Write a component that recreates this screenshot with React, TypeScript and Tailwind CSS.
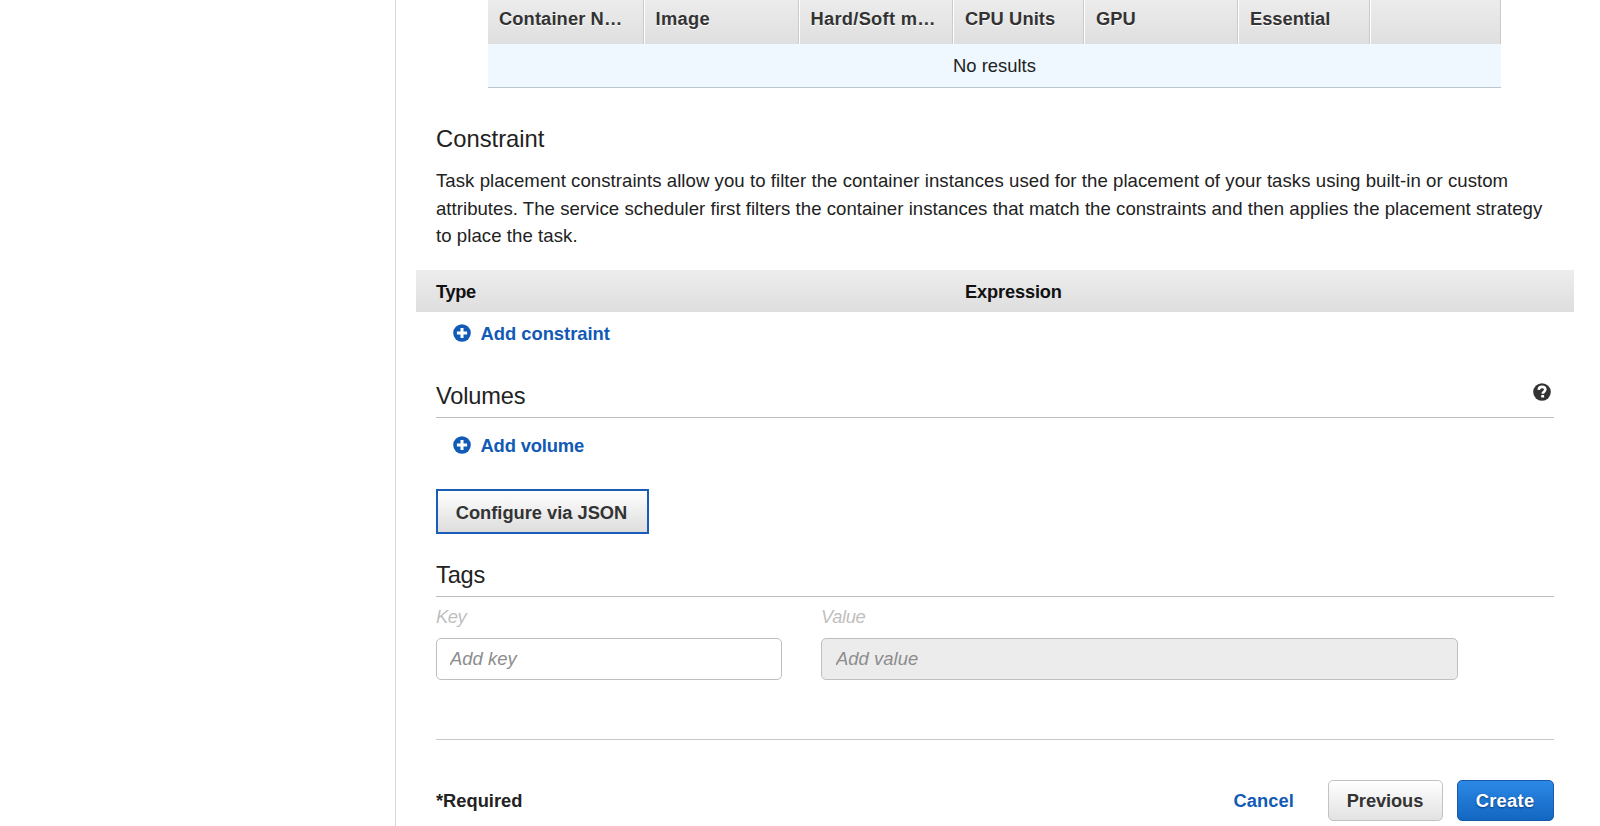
import type { ReactNode } from "react";

const columns = [
  { label: "Container N…", width: "w-[156px]", tracking: "tracking-[0.12px]", pad: "pl-[11px]" },
  { label: "Image", width: "w-[155px]", tracking: "tracking-[0.35px]", pad: "pl-[10.5px]" },
  { label: "Hard/Soft m…", width: "w-[154px]", tracking: "tracking-[0.28px]", pad: "pl-[10.5px]" },
  { label: "CPU Units", width: "w-[131px]", tracking: "tracking-[0.1px]", pad: "pl-[11px]" },
  { label: "GPU", width: "w-[154px]", tracking: "tracking-[0px]", pad: "pl-[11px]" },
  { label: "Essential", width: "w-[132px]", tracking: "tracking-[0px]", pad: "pl-[11px]" },
  { label: "", width: "w-[131px]", tracking: "", pad: "" },
];

function ContainerTable() {
  return (
    <div className="ml-[52px] w-[1013px]">
      <div className="flex h-[44px] bg-linear-to-b from-[#ececec] to-[#dfdfdf]">
        {columns.map((c, i) => (
          <div
            key={i}
            className={`${c.width} ${c.tracking} ${c.pad} shrink-0 border-r border-[#cbcbcb] text-[18.3px] leading-[37px] font-bold whitespace-nowrap text-[#333] [text-shadow:0_1px_0_#fff] ${i > 0 ? "border-l border-l-white" : ""}`}
          >
            {c.label}
          </div>
        ))}
      </div>
      <div className="h-[44px] border-b border-[#b9c8d0] bg-[#eff8ff] text-center text-[18.4px] leading-[43px] text-[#222]">
        No results
      </div>
    </div>
  );
}

function SectionTitle({ children, help }: { children: ReactNode; help?: boolean }) {
  return (
    <div className="flex h-[38px] justify-between border-b border-[#bdbdbd]">
      <h2 className="pt-px text-[23.6px] leading-[30px] tracking-[-0.15px]">{children}</h2>
      {help && (
        <svg className="mt-[3px] mr-[3px] h-[18px] w-[18px]" viewBox="0 0 18 18">
          <circle cx="9" cy="9" r="8.8" fill="#333" />
          <path d="M5.7 6.9C5.8 4.8 7.1 3.9 9 3.9c2 0 3.3 1.1 3.3 2.7 0 2-2.6 2.1-2.6 4.2" fill="none" stroke="#fff" strokeWidth="2.6" />
          <rect x="8.2" y="12" width="2.9" height="2.5" fill="#fff" />
        </svg>
      )}
    </div>
  );
}

function AddLink({ children }: { children: ReactNode }) {
  return (
    <a className="ml-[17px] flex h-[30px] items-center text-[18.4px] leading-[30px] font-bold text-[#115ab5]">
      <svg className="mr-[9.5px] mb-[2px] h-[18px] w-[18px]" viewBox="0 0 18 18">
        <circle cx="9" cy="9" r="8.8" fill="#115ab5" />
        <path d="M9 3.9v10.2M3.9 9h10.2" stroke="#fff" strokeWidth="3" />
      </svg>
      {children}
    </a>
  );
}

export default function App() {
  return (
    <div className="flex h-[826px] overflow-hidden bg-white font-['Liberation_Sans',Arial,sans-serif] text-[#222]">
      <aside className="w-[396px] shrink-0 border-r border-[#d8d8d8]" />
      <main className="ml-10 w-[1118px] shrink-0">
        <ContainerTable />

        <h2 className="mt-[36px] text-[23.8px] leading-[30px]">Constraint</h2>
        <p className="mt-[13px] h-[83px] text-[18.6px] leading-[27.6px] whitespace-nowrap">
          <span className="block tracking-[0.05px]">
            Task placement constraints allow you to filter the container instances used for the placement of your tasks using built-in or custom
          </span>
          <span className="block tracking-[0.028px]">
            attributes. The service scheduler first filters the container instances that match the constraints and then applies the placement strategy
          </span>
          <span className="block tracking-[0.06px]">to place the task.</span>
        </p>

        <div className="-mx-5 mt-[20px] flex h-[42px] bg-linear-to-b from-[#ededed] to-[#dedede] px-5 text-[18.2px] leading-[44px] font-bold text-[#111]">
          <div className="w-[529px] tracking-[-0.3px]">Type</div>
          <div className="tracking-[-0.12px]">Expression</div>
        </div>
        <div className="mt-[7px] tracking-[-0.03px]">
          <AddLink>Add constraint</AddLink>
        </div>

        <div className="mt-[31px]">
          <SectionTitle help>Volumes</SectionTitle>
        </div>
        <div className="mt-[13px] tracking-[-0.17px]">
          <AddLink>Add volume</AddLink>
        </div>

        <button className="mt-[28px] block h-[45px] w-[213px] border-2 border-[#1a5cb8] bg-linear-to-b from-white to-[#dddddd] pt-[3px] pr-[2px] text-[18.3px] leading-[38px] font-bold text-[#333] tracking-[-0.01px]">
          Configure via JSON
        </button>

        <div className="mt-[25px]">
          <SectionTitle>Tags</SectionTitle>
        </div>
        <div className="mt-[5px] flex gap-[39.5px] text-[18.4px] italic tracking-[0.05px]">
          <label className="w-[345.5px]">
            <span className="block h-[30px] leading-[30px] text-[#bfbfbf] tracking-[-0.5px]">Key</span>
            <input
              placeholder="Add key"
              className="mt-[6px] block h-[42px] w-full rounded-[5px] border border-[#bfbfbf] bg-white px-[13px] italic placeholder:text-[#8c8c8c]"
            />
          </label>
          <label className="w-[637px]">
            <span className="block h-[30px] leading-[30px] text-[#bfbfbf] tracking-[-0.4px]">Value</span>
            <input
              disabled
              placeholder="Add value"
              className="mt-[6px] block h-[42px] w-full rounded-[5px] border border-[#bfbfbf] bg-[#ececec] px-[14px] italic placeholder:text-[#8c8c8c]"
            />
          </label>
        </div>

        <div className="mt-[59px] h-px bg-[#c8c8c8]" />

        <div className="mt-[40px] flex h-[41px] text-[18.3px] leading-[41px] font-bold">
          <span className="flex-1">*Required</span>
          <a className="mr-[34px] text-[#115ab5] tracking-[0.1px]">Cancel</a>
          <button className="mr-[14px] h-[41px] w-[115px] rounded-[5px] border border-[#c2c2c2] bg-linear-to-b from-white to-[#e2e2e2] pr-px leading-[39px] tracking-[-0.1px] text-[#333]">
            Previous
          </button>
          <button className="h-[41px] w-[97px] rounded-[5px] border border-[#1659ad] bg-linear-to-b from-[#2c88e6] to-[#1267c1] pr-px leading-[39px] tracking-[0.3px] text-white [text-shadow:0_1px_2px_#0a3d7a]">
            Create
          </button>
        </div>
      </main>
    </div>
  );
}
